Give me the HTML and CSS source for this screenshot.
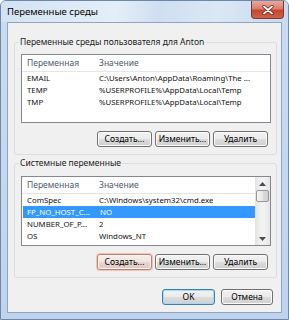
FILE: index.html
```html
<!DOCTYPE html>
<html>
<head>
<meta charset="utf-8">
<link rel="stylesheet" href="styles.css">
</head>
<body>
<div class="window">
  <div class="titlebar">
    <span class="title">Переменные среды</span>
    <div class="close">
      <svg width="12" height="10" viewBox="0 0 12 10"><path d="M2 1.5 L10 8.5 M10 1.5 L2 8.5" stroke="#5a1a12" stroke-width="3.2" stroke-linecap="round"/><path d="M2 1.5 L10 8.5 M10 1.5 L2 8.5" stroke="#ffffff" stroke-width="1.8" stroke-linecap="round"/></svg>
    </div>
  </div>
  <div class="client">
    <fieldset class="group g1">
      <legend>Переменные среды пользователя для Anton</legend>
      <div class="list l1">
        <div class="cols">
          <div class="hdr"><span class="c1">Переменная</span><span class="c2">Значение</span></div>
          <div class="row"><span class="c1">EMAIL</span><span class="c2">C:\Users\Anton\AppData\Roaming\The ...</span></div>
          <div class="row"><span class="c1">TEMP</span><span class="c2">%USERPROFILE%\AppData\Local\Temp</span></div>
          <div class="row"><span class="c1">TMP</span><span class="c2">%USERPROFILE%\AppData\Local\Temp</span></div>
        </div>
      </div>
      <div class="btns">
        <button class="btn">Создать...</button>
        <button class="btn">Изменить...</button>
        <button class="btn">Удалить</button>
      </div>
    </fieldset>
    <fieldset class="group g2">
      <legend>Системные переменные</legend>
      <div class="list l2">
        <div class="cols">
          <div class="hdr"><span class="c1">Переменная</span><span class="c2">Значение</span></div>
          <div class="row"><span class="c1">ComSpec</span><span class="c2">C:\Windows\system32\cmd.exe</span></div>
          <div class="row sel"><span class="c1">FP_NO_HOST_C...</span><span class="c2">NO</span></div>
          <div class="row"><span class="c1">NUMBER_OF_P...</span><span class="c2">2</span></div>
          <div class="row"><span class="c1">OS</span><span class="c2">Windows_NT</span></div>
        </div>
        <div class="vscroll">
          <div class="arrow up"><svg width="7" height="4" viewBox="0 0 7 4"><path d="M0 4 L3.5 0 L7 4 Z" fill="#4d4d4d"/></svg></div>
          <div class="track"><div class="thumb"></div></div>
          <div class="arrow down"><svg width="7" height="4" viewBox="0 0 7 4"><path d="M0 0 L3.5 4 L7 0 Z" fill="#4d4d4d"/></svg></div>
        </div>
      </div>
      <div class="btns">
        <button class="btn hot">Создать...</button>
        <button class="btn">Изменить...</button>
        <button class="btn">Удалить</button>
      </div>
    </fieldset>
    <div class="dlgbtns">
      <button class="btn ok">OK</button>
      <button class="btn cancel">Отмена</button>
    </div>
  </div>
</div>
</body>
</html>
```
FILE: styles.css
```css
html, body {
  margin: 0;
  padding: 0;
  background: #ffffff;
}
body {
  width: 289px;
  height: 320px;
  overflow: hidden;
  font-family: "Noto Sans", "Open Sans", sans-serif;
  font-size: 8.5px;
  color: #111;
}
.window {
  box-sizing: border-box;
  width: 289px;
  height: 320px;
  border: 1px solid #6d88a8;
  border-radius: 6px 6px 0 0;
  background: linear-gradient(to bottom, #d9e6f4 0px, #c9dbef 22px, #bfd4ec 100%);
  display: flex;
  flex-direction: column;
}
.titlebar {
  height: 21px;
  display: flex;
  justify-content: space-between;
  align-items: flex-start;
  background: linear-gradient(100deg, #d3e2f3 0%, #e4eef8 40%, #cfdff1 55%, #dae7f5 75%, #c8daee 100%);
  border-radius: 5px 5px 0 0;
}
.title {
  font-size: 9.5px;
  line-height: 21px;
  padding-left: 6px;
  color: #000;
}
.close {
  width: 33px;
  height: 18px;
  margin-right: 4px;
  box-sizing: border-box;
  border: 1px solid #7a3a32;
  border-top: none;
  border-radius: 0 0 4px 4px;
  background: linear-gradient(to bottom, #eaa99c 0%, #dc7d6b 45%, #c8452f 55%, #d0614a 100%);
  display: flex;
  align-items: center;
  justify-content: center;
}
.client {
  flex: 1;
  margin: 0 6px 6px 6px;
  border: 1px solid #8fa6c0;
  background: #f0f0f0;
  padding: 13px 4px 0 6px;
  display: flex;
  flex-direction: column;
}
.group {
  margin: 0;
  padding: 0 5px 7px 6px;
  border: 1px solid #d5dfe5;
  border-radius: 3px;
  min-width: 0;
}
.group legend {
  padding: 0 1px;
  margin-left: -2px;
  line-height: 12px;
  color: #1a1a1a;
}
.g2 {
  margin-top: 2px;
}
.list {
  box-sizing: border-box;
  margin-top: 6px;
  border: 1px solid #828790;
  background: #ffffff;
  display: flex;
}
.l1 {
  height: 69px;
}
.l2 {
  height: 70px;
  margin-top: 7px;
}
.cols {
  flex: 1;
  min-width: 0;
}
.hdr {
  height: 16px;
  line-height: 16px;
  border-bottom: 1px solid #e5e5e5;
  color: #4c5a6c;
  display: flex;
}
.row {
  height: 12px;
  line-height: 12px;
  display: flex;
  white-space: nowrap;
  font-size: 7.8px;
}
.c1 {
  box-sizing: border-box;
  width: 77px;
  padding-left: 5px;
  flex: none;
  overflow: hidden;
}
.c2 {
  overflow: hidden;
}
.row.sel {
  background: #3399ff;
  color: #ffffff;
  margin-left: 1px;
}
.row.sel .c1 {
  padding-left: 4px;
}
.vscroll {
  width: 15px;
  flex: none;
  display: flex;
  flex-direction: column;
  background: linear-gradient(to right, #e3e3e3, #f2f2f2 40%, #f2f2f2 60%, #e6e6e6);
}
.arrow {
  height: 13px;
  display: flex;
  align-items: center;
  justify-content: center;
}
.track {
  flex: 1;
  padding: 0 1px;
}
.thumb {
  height: 12px;
  box-sizing: border-box;
  border: 1px solid #979797;
  border-radius: 2px;
  background: linear-gradient(to right, #f4f4f4, #e8e8e8 50%, #d9d9d9 51%, #d2d2d2);
}
.btns {
  margin-top: 8px;
  display: flex;
  justify-content: flex-end;
  gap: 3px;
  padding-right: 3px;
}
.btn {
  box-sizing: border-box;
  width: 55px;
  height: 16px;
  padding: 0;
  margin: 0;
  font-family: "Noto Sans", "Open Sans", sans-serif;
  font-size: 8.5px;
  line-height: 14px;
  color: #000;
  border: 1px solid #707070;
  border-radius: 3px;
  background: linear-gradient(to bottom, #f2f2f2 0%, #ebebeb 50%, #dddddd 51%, #cfcfcf 100%);
  box-shadow: inset 0 0 0 1px #fbfbfb;
}
.btn.hot {
  border-color: #c67d6b;
  background: linear-gradient(to bottom, #f6efec 0%, #efe4df 50%, #e6d6cf 51%, #dccbc4 100%);
  box-shadow: 0 0 0 1px #f0c4b6, inset 0 0 0 1px #fbf4f1;
}
.dlgbtns {
  margin-top: 11px;
  display: flex;
  justify-content: flex-end;
  gap: 6px;
  padding-right: 4px;
}
.btn.ok {
  width: 53px;
  border-color: #3c7fb1;
  box-shadow: inset 0 0 0 1px #a8d8f5;
}
.btn.cancel {
  width: 52px;
}
```
